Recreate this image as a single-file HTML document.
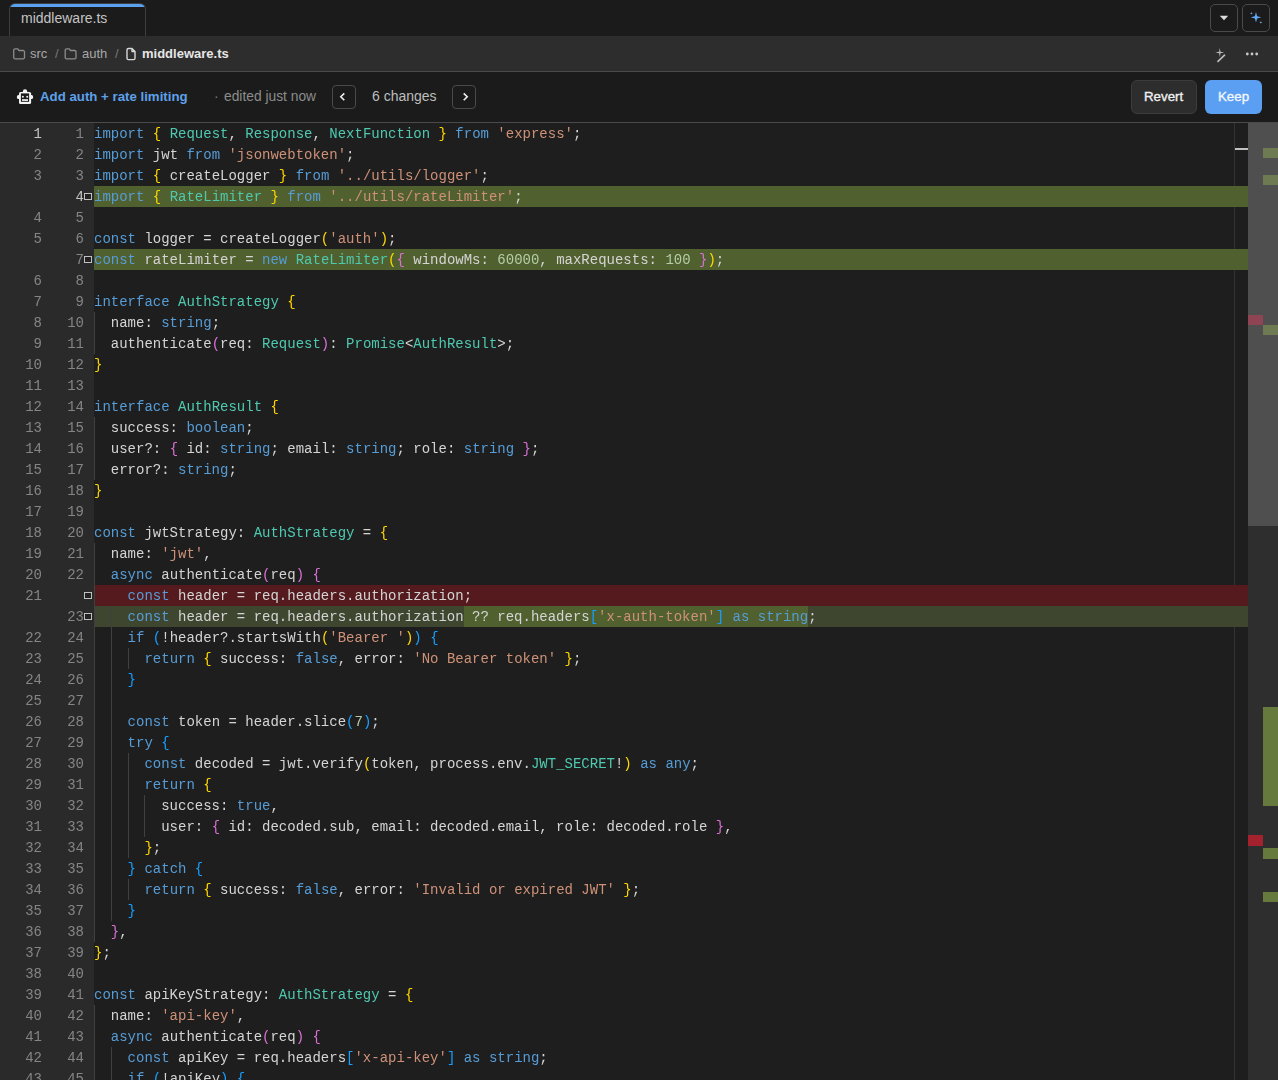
<!DOCTYPE html>
<html><head><meta charset="utf-8">
<style>
*{box-sizing:border-box;margin:0;padding:0}
html,body{width:1278px;height:1080px;overflow:hidden;background:#1e1e1e;font-family:"Liberation Sans",sans-serif}
.abs{position:absolute}
#tabbar{position:absolute;left:0;top:0;width:1278px;height:36px;background:#1b1b1b}
#tab{position:absolute;left:9px;top:3px;width:137px;height:33px;border:1px solid #3e3e3e;border-bottom:none;border-radius:6px 6px 0 0;background:#1b1b1b;overflow:hidden}
#tab:before{content:"";position:absolute;left:0;right:0;top:0;height:2.5px;background:#5aa2f0}
#tab span{position:absolute;left:11px;top:6px;font-size:14px;color:#c4c4c4}
.tbtn{position:absolute;top:4px;width:28px;height:28px;border:1px solid #4a4a4a;border-radius:5px;background:#1b1b1b}
#crumb{position:absolute;left:0;top:36px;width:1278px;height:35px;background:#2d2d2d}
#crumbline{position:absolute;left:0;top:71px;width:1278px;height:1px;background:#4a4a4a}
#crumb .c{position:absolute;top:10px;font-size:13px;color:#a8a8a8}
#act{position:absolute;left:0;top:72px;width:1278px;height:50px;background:#1b1b1b}
#actline{position:absolute;left:0;top:122px;width:1278px;height:1px;background:#4a4a4a}
.nbtn{position:absolute;top:85px;width:24px;height:24px;border:1px solid #4a4a4a;border-radius:4px}
#editor{position:absolute;left:0;top:123px;width:1278px;height:957px;background:#1e1e1e;overflow:hidden}
#gutter{position:absolute;left:0;top:123px;width:94px;height:957px;background:#2a2a2a}
.on,.nn{position:absolute;will-change:transform;transform-origin:0 13.75px;transform:translateY(1.25px) scaleY(1.1);font-family:"Liberation Mono",monospace;font-size:14px;line-height:21px;height:21px;color:#858585;text-align:right}
.on{left:0;width:42px}
.nn{left:42px;width:42px}
.on.act,.nn.act{color:#c6c6c6}
.gd{position:absolute;width:1px;height:21px;background:#404040}
.box{position:absolute;left:84px;width:8px;height:7px;border:1px solid #c0c0c0;background:#232323}
.ln{position:absolute;left:94px;width:1154px;height:21px}
.ln.add{background:rgb(80,96,47)}
.ln.del{background:rgb(84,26,30)}
.ln.mod{background:rgb(62,70,47)}
.ins{position:absolute;top:0;height:21px;background:rgb(80,96,47)}
.code{position:absolute;left:0;top:0;will-change:transform;transform-origin:0 13.75px;transform:translateY(1.25px) scaleY(1.1);font-family:"Liberation Mono",monospace;font-size:14px;line-height:21px;white-space:pre;color:#d4d4d4}
.k{color:#569cd6}.t{color:#4ec9b0}.s{color:#ce9178}.n{color:#b5cea8}
#ruler{position:absolute;left:1234px;top:123px;width:1px;height:957px;background:#333}
#track{position:absolute;left:1248px;top:123px;width:30px;height:957px;background:#2e2e2e}
#slider{position:absolute;left:1248px;top:123px;width:30px;height:403px;background:#4f4f4f}
.mk{position:absolute}
</style></head><body>
<div id="tabbar"></div>
<div id="tab"><span>middleware.ts</span></div>
<div class="tbtn" style="left:1210px"></div>
<div class="tbtn" style="left:1242px"></div>
<div id="crumb"></div>
<div id="crumbline"></div>
<span class="abs" style="left:30px;top:46px;font-size:13px;color:#a8a8a8">src</span>
<span class="abs" style="left:55px;top:46px;font-size:13px;color:#777">/</span>
<span class="abs" style="left:82px;top:46px;font-size:13px;color:#a8a8a8">auth</span>
<span class="abs" style="left:115px;top:46px;font-size:13px;color:#777">/</span>
<span class="abs" style="left:142px;top:46px;font-size:13px;font-weight:700;color:#e6e6e6">middleware.ts</span>
<div id="act"></div>
<div id="actline"></div>
<span class="abs" style="left:40px;top:89px;font-size:13.25px;font-weight:700;color:#5ea1ea">Add auth + rate limiting</span>
<span class="abs" style="left:214px;top:88px;font-size:14px;color:#777">·</span>
<span class="abs" style="left:224px;top:88.5px;font-size:13.8px;color:#8c8c8c">edited just now</span>
<div class="nbtn" style="left:332px"></div>
<span class="abs" style="left:372px;top:88px;font-size:14px;color:#bdbdbd">6 changes</span>
<div class="nbtn" style="left:452px"></div>
<div class="abs" style="left:1131px;top:80px;width:66px;height:34px;background:#2d2d2d;border:1px solid #3c3c3c;border-radius:6px"></div>
<span class="abs" style="left:1144px;top:89px;font-size:13.3px;font-weight:400;-webkit-text-stroke:0.35px #f0f0f0;color:#f0f0f0">Revert</span>
<div class="abs" style="left:1205px;top:80px;width:57px;height:34px;background:#5a9ff2;border-radius:6px"></div>
<span class="abs" style="left:1218px;top:89px;font-size:13.3px;font-weight:400;-webkit-text-stroke:0.35px #f4f8ff;color:#f4f8ff">Keep</span>
<svg class="abs" style="left:0;top:0" width="1278" height="123" viewBox="0 0 1278 123" fill="none">
<!-- caret -->
<path d="M1219.8,15.8 L1228.2,15.8 L1224,20.2 Z" fill="#dcdcdc"/>
<!-- sparkle -->
<path d="M1256,12 L1257.1,16.2 L1261.2,17.3 L1257.1,18.4 L1256,22.6 L1254.9,18.4 L1250.8,17.3 L1254.9,16.2 Z" fill="#62aaf7"/>
<path d="M1251.3,12 L1251.7,12.9 L1252.6,13.3 L1251.7,13.7 L1251.3,14.6 L1250.9,13.7 L1250,13.3 L1250.9,12.9 Z" fill="#7fb6f0"/>
<path d="M1260.9,21.1 L1261.3,22 L1262.2,22.4 L1261.3,22.8 L1260.9,23.7 L1260.5,22.8 L1259.6,22.4 L1260.5,22 Z" fill="#7fb6f0"/>
<!-- folders -->
<path d="M13.7,50.3 a1.4,1.4 0 0 1 1.4,-1.4 h2.6 l1.3,1.6 h4.1 a1.4,1.4 0 0 1 1.4,1.4 v5.5 a1.4,1.4 0 0 1 -1.4,1.4 h-8 a1.4,1.4 0 0 1 -1.4,-1.4 z" stroke="#8c8c8c" stroke-width="1.3"/>
<path d="M65.2,50.3 a1.4,1.4 0 0 1 1.4,-1.4 h2.6 l1.3,1.6 h4.1 a1.4,1.4 0 0 1 1.4,1.4 v5.5 a1.4,1.4 0 0 1 -1.4,1.4 h-8 a1.4,1.4 0 0 1 -1.4,-1.4 z" stroke="#8c8c8c" stroke-width="1.3"/>
<!-- file -->
<path d="M127,49.9 a1.4,1.4 0 0 1 1.4,-1.4 h3.6 l3,3 v6.7 a1.4,1.4 0 0 1 -1.4,1.4 h-5.2 a1.4,1.4 0 0 1 -1.4,-1.4 z M132,48.5 v3 h3" stroke="#d8d8d8" stroke-width="1.4" stroke-linejoin="round"/>
<!-- wand -->
<path d="M1219.8,48 L1220.5,51.8 L1224.3,52.5 L1220.5,53.2 L1219.8,57 L1219.1,53.2 L1215.3,52.5 L1219.1,51.8 Z" fill="#b8b8b8"/>
<path d="M1218,61.3 L1224.5,55.2" stroke="#b8b8b8" stroke-width="1.8" stroke-linecap="round"/>
<!-- dots -->
<circle cx="1247.3" cy="54" r="1.4" fill="#c8c8c8"/><circle cx="1252" cy="54" r="1.4" fill="#c8c8c8"/><circle cx="1256.7" cy="54" r="1.4" fill="#c8c8c8"/>
<!-- robot -->
<rect x="16.9" y="95.1" width="16.2" height="4" rx="1.6" fill="#f4f4f4"/>
<rect x="22.9" y="89.2" width="4.2" height="4" rx="2" fill="#f4f4f4"/>
<rect x="19" y="92" width="12.1" height="12" rx="1.6" fill="#f4f4f4"/>
<rect x="20.9" y="93.4" width="8.2" height="8.4" fill="#1b1b1b"/>
<circle cx="22.9" cy="96.7" r="1" fill="#f4f4f4"/><circle cx="27.2" cy="96.7" r="1" fill="#f4f4f4"/>
<rect x="22" y="99.2" width="6" height="1.7" fill="#f4f4f4"/>
<!-- chevrons -->
<path d="M344.3,93.4 L340.8,96.8 L344.3,100.2" stroke="#f0f0f0" stroke-width="1.6"/>
<path d="M463.7,93.4 L467.2,96.8 L463.7,100.2" stroke="#f0f0f0" stroke-width="1.6"/>
</svg>
<div id="editor"></div>
<div id="gutter"></div>
<div class="on act" style="top:123px">1</div><div class="nn" style="top:123px">1</div>
<div class="on" style="top:144px">2</div><div class="nn" style="top:144px">2</div>
<div class="on" style="top:165px">3</div><div class="nn" style="top:165px">3</div>
<div class="on" style="top:186px"></div><div class="nn act" style="top:186px">4</div>
<div class="box" style="top:193px"></div>
<div class="on" style="top:207px">4</div><div class="nn" style="top:207px">5</div>
<div class="on" style="top:228px">5</div><div class="nn" style="top:228px">6</div>
<div class="on" style="top:249px"></div><div class="nn" style="top:249px">7</div>
<div class="box" style="top:256px"></div>
<div class="on" style="top:270px">6</div><div class="nn" style="top:270px">8</div>
<div class="on" style="top:291px">7</div><div class="nn" style="top:291px">9</div>
<div class="on" style="top:312px">8</div><div class="nn" style="top:312px">10</div>
<div class="on" style="top:333px">9</div><div class="nn" style="top:333px">11</div>
<div class="on" style="top:354px">10</div><div class="nn" style="top:354px">12</div>
<div class="on" style="top:375px">11</div><div class="nn" style="top:375px">13</div>
<div class="on" style="top:396px">12</div><div class="nn" style="top:396px">14</div>
<div class="on" style="top:417px">13</div><div class="nn" style="top:417px">15</div>
<div class="on" style="top:438px">14</div><div class="nn" style="top:438px">16</div>
<div class="on" style="top:459px">15</div><div class="nn" style="top:459px">17</div>
<div class="on" style="top:480px">16</div><div class="nn" style="top:480px">18</div>
<div class="on" style="top:501px">17</div><div class="nn" style="top:501px">19</div>
<div class="on" style="top:522px">18</div><div class="nn" style="top:522px">20</div>
<div class="on" style="top:543px">19</div><div class="nn" style="top:543px">21</div>
<div class="on" style="top:564px">20</div><div class="nn" style="top:564px">22</div>
<div class="on" style="top:585px">21</div><div class="nn" style="top:585px"></div>
<div class="box" style="top:592px"></div>
<div class="on" style="top:606px"></div><div class="nn" style="top:606px">23</div>
<div class="box" style="top:613px"></div>
<div class="on" style="top:627px">22</div><div class="nn" style="top:627px">24</div>
<div class="on" style="top:648px">23</div><div class="nn" style="top:648px">25</div>
<div class="on" style="top:669px">24</div><div class="nn" style="top:669px">26</div>
<div class="on" style="top:690px">25</div><div class="nn" style="top:690px">27</div>
<div class="on" style="top:711px">26</div><div class="nn" style="top:711px">28</div>
<div class="on" style="top:732px">27</div><div class="nn" style="top:732px">29</div>
<div class="on" style="top:753px">28</div><div class="nn" style="top:753px">30</div>
<div class="on" style="top:774px">29</div><div class="nn" style="top:774px">31</div>
<div class="on" style="top:795px">30</div><div class="nn" style="top:795px">32</div>
<div class="on" style="top:816px">31</div><div class="nn" style="top:816px">33</div>
<div class="on" style="top:837px">32</div><div class="nn" style="top:837px">34</div>
<div class="on" style="top:858px">33</div><div class="nn" style="top:858px">35</div>
<div class="on" style="top:879px">34</div><div class="nn" style="top:879px">36</div>
<div class="on" style="top:900px">35</div><div class="nn" style="top:900px">37</div>
<div class="on" style="top:921px">36</div><div class="nn" style="top:921px">38</div>
<div class="on" style="top:942px">37</div><div class="nn" style="top:942px">39</div>
<div class="on" style="top:963px">38</div><div class="nn" style="top:963px">40</div>
<div class="on" style="top:984px">39</div><div class="nn" style="top:984px">41</div>
<div class="on" style="top:1005px">40</div><div class="nn" style="top:1005px">42</div>
<div class="on" style="top:1026px">41</div><div class="nn" style="top:1026px">43</div>
<div class="on" style="top:1047px">42</div><div class="nn" style="top:1047px">44</div>
<div class="on" style="top:1068px">43</div><div class="nn" style="top:1068px">45</div>
<div id="ruler"></div>
<div class="ln" style="top:123px"><div class="code"><span class="k">import</span> <span style="color:#ffd700">{</span> <span class="t">Request</span>, <span class="t">Response</span>, <span class="t">NextFunction</span> <span style="color:#ffd700">}</span> <span class="k">from</span> <span class="s">&#x27;express&#x27;</span>;</div></div>
<div class="ln" style="top:144px"><div class="code"><span class="k">import</span> jwt <span class="k">from</span> <span class="s">&#x27;jsonwebtoken&#x27;</span>;</div></div>
<div class="ln" style="top:165px"><div class="code"><span class="k">import</span> <span style="color:#ffd700">{</span> createLogger <span style="color:#ffd700">}</span> <span class="k">from</span> <span class="s">&#x27;../utils/logger&#x27;</span>;</div></div>
<div class="ln add" style="top:186px"><div class="code"><span class="k">import</span> <span style="color:#ffd700">{</span> <span class="t">RateLimiter</span> <span style="color:#ffd700">}</span> <span class="k">from</span> <span class="s">&#x27;../utils/rateLimiter&#x27;</span>;</div></div>
<div class="ln" style="top:207px"><div class="code"></div></div>
<div class="ln" style="top:228px"><div class="code"><span class="k">const</span> logger = createLogger<span style="color:#ffd700">(</span><span class="s">&#x27;auth&#x27;</span><span style="color:#ffd700">)</span>;</div></div>
<div class="ln add" style="top:249px"><div class="code"><span class="k">const</span> rateLimiter = <span class="k">new</span> <span class="t">RateLimiter</span><span style="color:#ffd700">(</span><span style="color:#da70d6">{</span> windowMs: <span class="n">60000</span>, maxRequests: <span class="n">100</span> <span style="color:#da70d6">}</span><span style="color:#ffd700">)</span>;</div></div>
<div class="ln" style="top:270px"><div class="code"></div></div>
<div class="ln" style="top:291px"><div class="code"><span class="k">interface</span> <span class="t">AuthStrategy</span> <span style="color:#ffd700">{</span></div></div>
<div class="ln" style="top:312px"><div class="code">  name: <span class="k">string</span>;</div></div>
<div class="ln" style="top:333px"><div class="code">  authenticate<span style="color:#da70d6">(</span>req: <span class="t">Request</span><span style="color:#da70d6">)</span>: <span class="t">Promise</span>&lt;<span class="t">AuthResult</span>&gt;;</div></div>
<div class="ln" style="top:354px"><div class="code"><span style="color:#ffd700">}</span></div></div>
<div class="ln" style="top:375px"><div class="code"></div></div>
<div class="ln" style="top:396px"><div class="code"><span class="k">interface</span> <span class="t">AuthResult</span> <span style="color:#ffd700">{</span></div></div>
<div class="ln" style="top:417px"><div class="code">  success: <span class="k">boolean</span>;</div></div>
<div class="ln" style="top:438px"><div class="code">  user?: <span style="color:#da70d6">{</span> id: <span class="k">string</span>; email: <span class="k">string</span>; role: <span class="k">string</span> <span style="color:#da70d6">}</span>;</div></div>
<div class="ln" style="top:459px"><div class="code">  error?: <span class="k">string</span>;</div></div>
<div class="ln" style="top:480px"><div class="code"><span style="color:#ffd700">}</span></div></div>
<div class="ln" style="top:501px"><div class="code"></div></div>
<div class="ln" style="top:522px"><div class="code"><span class="k">const</span> jwtStrategy: <span class="t">AuthStrategy</span> = <span style="color:#ffd700">{</span></div></div>
<div class="ln" style="top:543px"><div class="code">  name: <span class="s">&#x27;jwt&#x27;</span>,</div></div>
<div class="ln" style="top:564px"><div class="code">  <span class="k">async</span> authenticate<span style="color:#da70d6">(</span>req<span style="color:#da70d6">)</span> <span style="color:#da70d6">{</span></div></div>
<div class="ln del" style="top:585px"><div class="code">    <span class="k">const</span> header = req.headers.authorization;</div></div>
<div class="ln mod" style="top:606px"><div class="ins" style="left:369.6px;width:344.4px"></div><div class="code">    <span class="k">const</span> header = req.headers.authorization ?? req.headers<span style="color:#179fff">[</span><span class="s">&#x27;x-auth-token&#x27;</span><span style="color:#179fff">]</span> <span class="k">as</span> <span class="k">string</span>;</div></div>
<div class="ln" style="top:627px"><div class="code">    <span class="k">if</span> <span style="color:#179fff">(</span>!header?.startsWith<span style="color:#ffd700">(</span><span class="s">&#x27;Bearer &#x27;</span><span style="color:#ffd700">)</span><span style="color:#179fff">)</span> <span style="color:#179fff">{</span></div></div>
<div class="ln" style="top:648px"><div class="code">      <span class="k">return</span> <span style="color:#ffd700">{</span> success: <span class="k">false</span>, error: <span class="s">&#x27;No Bearer token&#x27;</span> <span style="color:#ffd700">}</span>;</div></div>
<div class="ln" style="top:669px"><div class="code">    <span style="color:#179fff">}</span></div></div>
<div class="ln" style="top:690px"><div class="code"></div></div>
<div class="ln" style="top:711px"><div class="code">    <span class="k">const</span> token = header.slice<span style="color:#179fff">(</span><span class="n">7</span><span style="color:#179fff">)</span>;</div></div>
<div class="ln" style="top:732px"><div class="code">    <span class="k">try</span> <span style="color:#179fff">{</span></div></div>
<div class="ln" style="top:753px"><div class="code">      <span class="k">const</span> decoded = jwt.verify<span style="color:#ffd700">(</span>token, process.env.<span class="t">JWT_SECRET</span>!<span style="color:#ffd700">)</span> <span class="k">as</span> <span class="k">any</span>;</div></div>
<div class="ln" style="top:774px"><div class="code">      <span class="k">return</span> <span style="color:#ffd700">{</span></div></div>
<div class="ln" style="top:795px"><div class="code">        success: <span class="k">true</span>,</div></div>
<div class="ln" style="top:816px"><div class="code">        user: <span style="color:#da70d6">{</span> id: decoded.sub, email: decoded.email, role: decoded.role <span style="color:#da70d6">}</span>,</div></div>
<div class="ln" style="top:837px"><div class="code">      <span style="color:#ffd700">}</span>;</div></div>
<div class="ln" style="top:858px"><div class="code">    <span style="color:#179fff">}</span> <span class="k">catch</span> <span style="color:#179fff">{</span></div></div>
<div class="ln" style="top:879px"><div class="code">      <span class="k">return</span> <span style="color:#ffd700">{</span> success: <span class="k">false</span>, error: <span class="s">&#x27;Invalid or expired JWT&#x27;</span> <span style="color:#ffd700">}</span>;</div></div>
<div class="ln" style="top:900px"><div class="code">    <span style="color:#179fff">}</span></div></div>
<div class="ln" style="top:921px"><div class="code">  <span style="color:#da70d6">}</span>,</div></div>
<div class="ln" style="top:942px"><div class="code"><span style="color:#ffd700">}</span>;</div></div>
<div class="ln" style="top:963px"><div class="code"></div></div>
<div class="ln" style="top:984px"><div class="code"><span class="k">const</span> apiKeyStrategy: <span class="t">AuthStrategy</span> = <span style="color:#ffd700">{</span></div></div>
<div class="ln" style="top:1005px"><div class="code">  name: <span class="s">&#x27;api-key&#x27;</span>,</div></div>
<div class="ln" style="top:1026px"><div class="code">  <span class="k">async</span> authenticate<span style="color:#da70d6">(</span>req<span style="color:#da70d6">)</span> <span style="color:#da70d6">{</span></div></div>
<div class="ln" style="top:1047px"><div class="code">    <span class="k">const</span> apiKey = req.headers<span style="color:#179fff">[</span><span class="s">&#x27;x-api-key&#x27;</span><span style="color:#179fff">]</span> <span class="k">as</span> <span class="k">string</span>;</div></div>
<div class="ln" style="top:1068px"><div class="code">    <span class="k">if</span> <span style="color:#179fff">(</span>!apiKey<span style="color:#179fff">)</span> <span style="color:#179fff">{</span></div></div>
<div class="gd" style="left:94px;top:312px"></div>
<div class="gd" style="left:94px;top:333px"></div>
<div class="gd" style="left:94px;top:417px"></div>
<div class="gd" style="left:94px;top:438px"></div>
<div class="gd" style="left:94px;top:459px"></div>
<div class="gd" style="left:94px;top:543px"></div>
<div class="gd" style="left:94px;top:564px"></div>
<div class="gd" style="left:94px;top:585px"></div>
<div class="gd" style="left:94px;top:606px"></div>
<div class="gd" style="left:111px;top:606px"></div>
<div class="gd" style="left:94px;top:627px"></div>
<div class="gd" style="left:111px;top:627px"></div>
<div class="gd" style="left:94px;top:648px"></div>
<div class="gd" style="left:111px;top:648px"></div>
<div class="gd" style="left:128px;top:648px"></div>
<div class="gd" style="left:94px;top:669px"></div>
<div class="gd" style="left:111px;top:669px"></div>
<div class="gd" style="left:94px;top:690px"></div>
<div class="gd" style="left:111px;top:690px"></div>
<div class="gd" style="left:94px;top:711px"></div>
<div class="gd" style="left:111px;top:711px"></div>
<div class="gd" style="left:94px;top:732px"></div>
<div class="gd" style="left:111px;top:732px"></div>
<div class="gd" style="left:94px;top:753px"></div>
<div class="gd" style="left:111px;top:753px"></div>
<div class="gd" style="left:128px;top:753px"></div>
<div class="gd" style="left:94px;top:774px"></div>
<div class="gd" style="left:111px;top:774px"></div>
<div class="gd" style="left:128px;top:774px"></div>
<div class="gd" style="left:94px;top:795px"></div>
<div class="gd" style="left:111px;top:795px"></div>
<div class="gd" style="left:128px;top:795px"></div>
<div class="gd" style="left:144px;top:795px"></div>
<div class="gd" style="left:94px;top:816px"></div>
<div class="gd" style="left:111px;top:816px"></div>
<div class="gd" style="left:128px;top:816px"></div>
<div class="gd" style="left:144px;top:816px"></div>
<div class="gd" style="left:94px;top:837px"></div>
<div class="gd" style="left:111px;top:837px"></div>
<div class="gd" style="left:128px;top:837px"></div>
<div class="gd" style="left:94px;top:858px"></div>
<div class="gd" style="left:111px;top:858px"></div>
<div class="gd" style="left:94px;top:879px"></div>
<div class="gd" style="left:111px;top:879px"></div>
<div class="gd" style="left:128px;top:879px"></div>
<div class="gd" style="left:94px;top:900px"></div>
<div class="gd" style="left:111px;top:900px"></div>
<div class="gd" style="left:94px;top:921px"></div>
<div class="gd" style="left:94px;top:1005px"></div>
<div class="gd" style="left:94px;top:1026px"></div>
<div class="gd" style="left:94px;top:1047px"></div>
<div class="gd" style="left:111px;top:1047px"></div>
<div class="gd" style="left:94px;top:1068px"></div>
<div class="gd" style="left:111px;top:1068px"></div>
<div id="track"></div>
<div id="slider"></div>
<div class="mk" style="left:1235px;top:148px;width:13px;height:2px;background:#c0c0c0"></div>
<div class="mk" style="left:1263px;top:148px;width:15px;height:10px;background:#6d7a52"></div>
<div class="mk" style="left:1263px;top:175px;width:15px;height:10px;background:#6d7a52"></div>
<div class="mk" style="left:1248px;top:315px;width:15px;height:10px;background:#8e4452"></div>
<div class="mk" style="left:1263px;top:325px;width:15px;height:10px;background:#6d7a52"></div>
<div class="mk" style="left:1263px;top:707px;width:15px;height:99px;background:#657a3c"></div>
<div class="mk" style="left:1248px;top:835px;width:15px;height:11px;background:#a3222e"></div>
<div class="mk" style="left:1263px;top:848px;width:15px;height:11px;background:#657a3c"></div>
<div class="mk" style="left:1263px;top:892px;width:15px;height:10px;background:#657a3c"></div>
</body></html>
